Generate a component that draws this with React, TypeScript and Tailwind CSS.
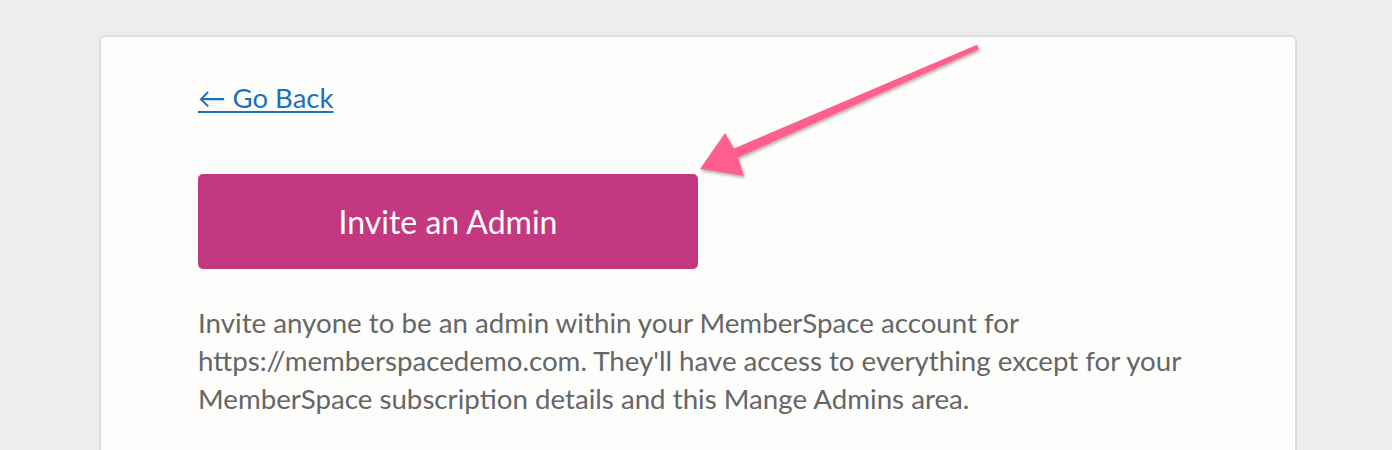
import React from 'react'

const lato = { fontFamily: 'Lato, "Open Sans", sans-serif' }

function Arrow() {
  return (
    <svg className="pointer-events-none absolute left-0 top-0" width="1392" height="450" viewBox="0 0 1392 450">
      <defs>
        <filter id="arrowShadow" x="-10%" y="-10%" width="120%" height="130%">
          <feDropShadow dx="1" dy="2" stdDeviation="1.5" floodColor="#000" floodOpacity="0.3" />
        </filter>
      </defs>
      <polygon
        points="977,44.7 734,148.4 725,133 700,169 744,176 738,157.6 979,49.3"
        fill="#ff5f8f"
        filter="url(#arrowShadow)"
      />
    </svg>
  )
}

export default function App() {
  return (
    <div className="relative h-[450px] overflow-hidden bg-[#ededed] pt-[35px]" style={lato}>
      <div className="ml-[99px] h-[500px] w-[1198px] rounded-[6px] border-2 border-[#dddddd] bg-[#fdfdfc] px-[97px] pt-[43px]">
        <a href="#" className="text-[27.5px] leading-[36px] text-[#1a73ba] underline decoration-2 underline-offset-[3px]">
          ← Go Back
        </a>
        <button
          type="button"
          className="mt-[58px] flex h-[95px] w-[500px] items-center justify-center rounded-[5px] bg-[#c4387f] text-[32px] text-white"
        >
          Invite an Admin
        </button>
        <p className="mt-[35px] text-[27.7px] leading-[38px] text-[#666666]">
          Invite anyone to be an admin within your MemberSpace account for https://memberspacedemo.com. They'll have
          access to everything except for your MemberSpace subscription details and this Mange Admins area.
        </p>
      </div>
      <Arrow />
    </div>
  )
}
